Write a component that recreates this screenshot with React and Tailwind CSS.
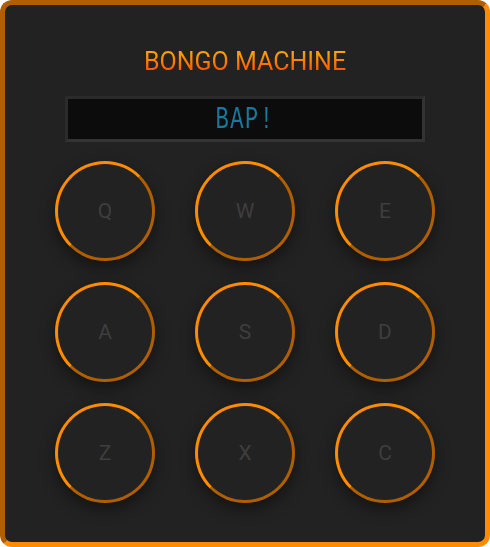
const rows = [
  ['Q', 'W', 'E'],
  ['A', 'S', 'D'],
  ['Z', 'X', 'C'],
];

function Pad({ label }) {
  return (
    <button
      type="button"
      className="w-[100px] h-[100px] rounded-full bg-[#222222] border-[3px] border-t-[#ff8c00] border-l-[#ff8c00] border-r-[#b05f00] border-b-[#b05f00] shadow-[0_6px_16px_rgba(0,0,0,0.45)] flex items-center justify-center pt-[2px] text-[21px] text-[#3e3e3e] font-['Roboto',sans-serif]"
    >
      {label}
    </button>
  );
}

export default function App() {
  return (
    <div className="w-[490px] h-[547px] bg-[#222222] rounded-[12px] border-[5px] border-t-[#b05f00] border-l-[#b05f00] border-r-[#ff8c00] border-b-[#ff8c00] flex flex-col items-center pt-[44px]">
      <h1 className="text-[25px] leading-[25px] font-['Roboto',sans-serif] bg-linear-to-b from-[#ffad00] to-[#ff4000] bg-clip-text text-transparent">
        BONGO MACHINE
      </h1>

      {/* display */}
      <div className="mt-[22px] w-[360px] h-[46px] bg-[#0c0c0c] border-[3px] border-t-[#2b2b2b] border-l-[#2b2b2b] border-r-[#333333] border-b-[#333333] flex items-center justify-center pt-[3px]">
        <span className="inline-block scale-y-[1.45] text-[22px] leading-none tracking-[1.5px] text-[#18799e] font-['Liberation_Mono',monospace]">
          BAP!
        </span>
      </div>

      <div className="mt-[19px] flex flex-col gap-[21px]">
        {rows.map((row, i) => (
          <div key={i} className="flex gap-[40px]">
            {row.map((k) => (
              <Pad key={k} label={k} />
            ))}
          </div>
        ))}
      </div>
    </div>
  );
}
